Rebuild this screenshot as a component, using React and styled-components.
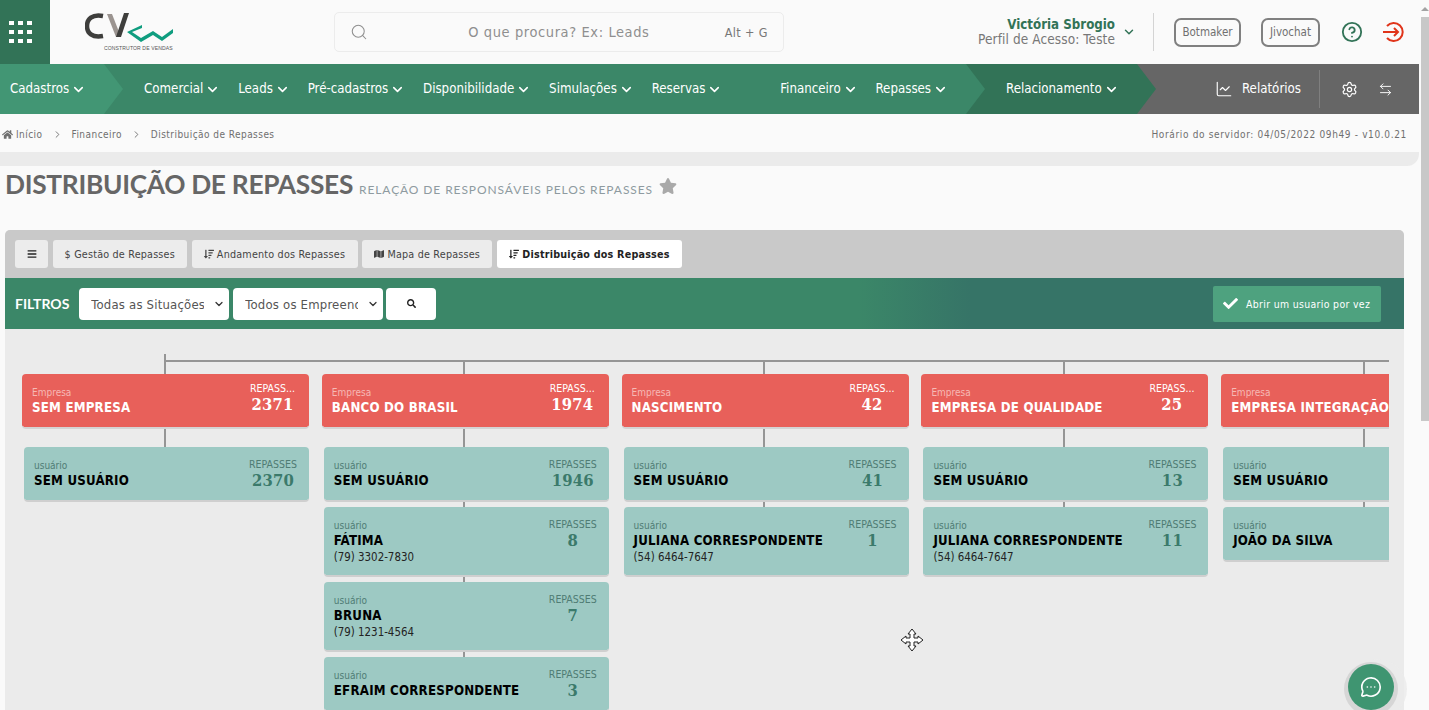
import React from 'react';
import styled, { createGlobalStyle } from 'styled-components';
import { Search, ChevronDown, LineChart, Settings, ArrowLeftRight, MessageCircleMore, CircleHelp, ChevronRight } from 'lucide-react';
import { FaHome, FaStar, FaBars, FaSortAmountDown, FaMap, FaCheck, FaSearch } from 'react-icons/fa';

const UI = '"DejaVu Sans Condensed", "DejaVu Sans", sans-serif';

const GlobalStyle = createGlobalStyle`
  html, body { margin: 0; padding: 0; height: 710px; overflow: hidden; background: #fafafa; }
  body { font-family: ${UI}; font-stretch: condensed; }
  * { box-sizing: border-box; }
`;

const Shell = styled.div`
  display: flex;
  width: 1429px;
  height: 710px;
  overflow: hidden;
`;

const Page = styled.div`
  width: 1419px;
  flex: none;
  position: relative;
`;

const Scrollbar = styled.div`
  width: 10px;
  flex: none;
  padding-left: 2px;
  display: flex;
  flex-direction: column;
`;

const ScrollUp = styled.div`
  height: 17px;
  display: flex;
  align-items: center;
  justify-content: center;
  &::before {
    content: '';
    border-left: 4px solid transparent;
    border-right: 4px solid transparent;
    border-bottom: 4px solid #a3a3a3;
  }
`;

const ScrollThumb = styled.div`
  height: 404px;
  background: #c8c8c8;
`;

const TopBar = styled.header`
  height: 64px;
  display: flex;
  align-items: center;
`;

const AppsButton = styled.div`
  width: 50px;
  height: 64px;
  background: #327357;
  padding-left: 9px;
  display: grid;
  grid-template-columns: repeat(3, 5px);
  grid-auto-rows: 4px;
  gap: 5px 4px;
  align-content: center;
  flex: none;
  i { background: #fff; display: block; }
`;

const LogoBox = styled.div`
  width: 284px;
  padding: 0 0 0 35px;
  flex: none;
  display: flex;
`;

const SearchBox = styled.div`
  width: 450px;
  height: 40px;
  border: 1px solid #ececec;
  border-radius: 5px;
  display: flex;
  align-items: center;
  padding: 0 15px;
  color: #8f8f8f;
  flex: none;
`;

const SearchHint = styled.span`
  flex: 1;
  text-align: center;
  font-size: 14.5px;
  letter-spacing: 0.6px;
  color: #8f8f8f;
  padding-left: 25px;
`;

const Shortcut = styled.span`
  font-size: 12.5px;
  color: #777;
  letter-spacing: 0.4px;
`;

const UserArea = styled.div`
  margin-left: auto;
  display: flex;
  align-items: center;
  padding-right: 14px;
`;

const UserText = styled.div`
  text-align: right;
  line-height: 15px;
  padding-bottom: 2px;
`;

const UserName = styled.div`
  font-size: 13.2px;
  font-weight: 700;
  color: #327357;
`;

const UserRole = styled.div`
  font-size: 13.5px;
  letter-spacing: 0.1px;
  line-height: 14px;
  color: #777;
`;

const UserChevron = styled(ChevronDown)`
  margin-left: 7px;
  flex: none;
`;

const Divider = styled.div`
  width: 1px;
  height: 38px;
  background: #d4d4d4;
  margin: 0 20px 0 17px;
`;

const PillButton = styled.div`
  height: 29px;
  width: ${(p) => p.$w}px;
  border: 2px solid #808080;
  border-radius: 7px;
  font-size: 11.5px;
  color: #707070;
  display: flex;
  align-items: center;
  justify-content: center;
  margin-right: ${(p) => p.$mr}px;
`;

const HelpIcon = styled(CircleHelp)`
  margin-right: 20px;
`;

const NavBar = styled.nav`
  height: 50px;
  display: flex;
  align-items: stretch;
  background: #3b8768;
  color: #fff;
  font-size: 13.2px;
  line-height: 48px;
`;

const NavSection = styled.div`
  display: flex;
  align-items: center;
  flex: none;
  width: ${(p) => p.$w}px;
  padding-left: ${(p) => p.$pl}px;
  margin-left: ${(p) => p.$ml || 0}px;
  gap: 17.8px;
  background: ${(p) => p.$bg};
  position: relative;
  z-index: ${(p) => p.$z};
  clip-path: polygon(0 0, calc(100% - 19px) 0, 100% 50%, calc(100% - 19px) 100%, 0 100%);
`;

const NavItem = styled.span`
  display: inline-flex;
  align-items: center;
  gap: 2px;
  white-space: nowrap;
  margin-left: ${(p) => p.$ml || 0}px;
`;

const NavRest = styled.div`
  flex: 1;
  margin-left: -19px;
  background: #666;
  display: flex;
  align-items: center;
  justify-content: flex-end;
`;

const ReportLink = styled.span`
  display: inline-flex;
  align-items: center;
  gap: 9px;
`;

const NavDivider = styled.div`
  width: 1px;
  height: 38px;
  background: #7f7f7f;
  margin: 0 21px 0 18px;
`;

const GearIcon = styled(Settings)`
  margin-right: 20px;
`;

const SwapIcon = styled(ArrowLeftRight)`
  margin-right: 26px;
`;

const Crumbs = styled.div`
  height: 38px;
  display: flex;
  align-items: center;
  justify-content: space-between;
  padding: 2px 12px 0 2px;
  font-size: 10px;
  color: #6f6f6f;
  letter-spacing: 0.45px;
`;

const CrumbTrail = styled.div`
  display: flex;
  align-items: center;
  gap: 3px;
  svg { color: #6f6f6f; }
`;

const CrumbSep = styled(ChevronRight)`
  margin: 0 6px;
`;

const ServerTime = styled.span`
  letter-spacing: 0.65px;
`;

const Band = styled.div`
  height: 14px;
  background: #ebebeb;
  border-radius: 0 0 12px 0;
`;

const TitleRow = styled.div`
  display: flex;
  align-items: baseline;
  padding: 2px 0 0 5px;
  height: 64px;
`;

const Title = styled.h1`
  margin: 0;
  font-family: Lato, sans-serif;
  font-size: 26.3px;
  font-weight: 700;
  color: #666;
  font-stretch: normal;
  letter-spacing: -0.3px;
`;

const Subtitle = styled.span`
  font-family: Lato, sans-serif;
  font-size: 12px;
  color: #8e9aa0;
  letter-spacing: 0.9px;
  margin-left: 6px;
`;

const StarIcon = styled(FaStar)`
  margin-left: 6px;
  align-self: flex-start;
  margin-top: 9px;
  color: #a9a9a9;
`;

const Panel = styled.section`
  margin: 0 15px 0 5px;
  background: #ebebeb;
  border-radius: 5px 5px 0 0;
  height: 480px;
  overflow: hidden;
`;

const TabRow = styled.div`
  height: 48px;
  background: #c9c9c9;
  display: flex;
  gap: 4.75px;
  padding: 10px 0 0 10px;
`;

const Tab = styled.div`
  height: 28px;
  width: ${(p) => p.$w}px;
  background: ${(p) => (p.$active ? '#fff' : '#ececec')};
  color: ${(p) => (p.$active ? '#222' : '#444')};
  font-weight: ${(p) => (p.$active ? 700 : 400)};
  border-radius: 3px;
  font-size: 10.7px;
  display: flex;
  align-items: center;
  justify-content: center;
  gap: 3px;
  letter-spacing: 0.2px;
  white-space: nowrap;
`;

const FilterBar = styled.div`
  height: 51px;
  display: flex;
  align-items: center;
  padding: 0 23px 0 10px;
  background: linear-gradient(90deg, #3b8768 0%, #3b8768 61%, #367467 69%, #367467 100%);
`;

const FilterLabel = styled.span`
  color: #fff;
  font-family: Lato, sans-serif;
  font-weight: 700;
  font-size: 14px;
  margin-right: 10px;
`;

const FilterSelect = styled.div`
  width: 150px;
  height: 32px;
  background: #fff;
  border-radius: 4px;
  margin-right: 4px;
  padding: 1px 4px 0 12px;
  display: flex;
  align-items: center;
  font-size: 13px;
  color: #555;
  letter-spacing: 0.2px;
  span { width: 113px; overflow: hidden; white-space: nowrap; }
  svg { margin-left: auto; color: #333; }
`;

const SearchButton = styled.div`
  width: 50px;
  height: 32px;
  background: #fff;
  border-radius: 4px;
  margin-left: -1px;
  display: flex;
  align-items: center;
  justify-content: center;
  color: #222;
`;

const ToggleButton = styled.div`
  margin-left: auto;
  width: 168px;
  height: 36px;
  background: #4ea27f;
  border-radius: 2px;
  color: #fff;
  font-size: 10.4px;
  display: flex;
  align-items: center;
  gap: 8px;
  padding-left: 10px;
  letter-spacing: 0.35px;
  white-space: nowrap;
`;

const TreeViewport = styled.div`
  width: 1384px;
  overflow: hidden;
  padding-top: 25px;
`;

const Rail = styled.div`
  height: 2px;
  margin: 6px 0 0 159px;
  background: #959595;
  position: relative;
  &::before {
    content: '';
    position: absolute;
    left: 0;
    top: -6px;
    width: 2px;
    height: 6px;
    background: #959595;
  }
`;

const Columns = styled.div`
  display: flex;
  padding-left: 11px;
  width: 1600px;
`;

const Column = styled.div`
  width: 299.8px;
  flex: none;
  padding: 0 6px;
  display: flex;
  flex-direction: column;
`;

const Connector = styled.div`
  width: 2px;
  height: ${(p) => p.$h}px;
  background: #959595;
  margin-left: 141.5px;
  flex: none;
`;

const CompanyCard = styled.div`
  width: 287px;
  height: 55px;
  background: #e8605a;
  border-radius: 4px;
  border-bottom: 2px solid #d4d4d4;
  background-clip: padding-box;
  color: #fff;
  display: flex;
  justify-content: space-between;
  padding: 0 14px 0 10px;
  white-space: nowrap;
  overflow: hidden;
`;

const UserCard = styled.div`
  width: 285px;
  margin-left: 2px;
  height: ${(p) => (p.$tall ? 70 : 55)}px;
  background: #9dc9c3;
  border-radius: 4px;
  border-bottom: 2px solid #cfcfcf;
  background-clip: padding-box;
  color: #000;
  display: flex;
  justify-content: space-between;
  padding: 0 12px 0 10px;
  white-space: nowrap;
  overflow: hidden;
`;

const CardInfo = styled.div`
  padding-top: 13px;
`;

const SmallLabel = styled.div`
  font-size: 10px;
  line-height: 12px;
  color: ${(p) => (p.$light ? '#f6b9b5' : '#4f7c74')};
`;

const CardName = styled.div`
  font-size: 13.2px;
  font-weight: 700;
  line-height: 16px;
  margin-top: 1px;
  letter-spacing: 0.2px;
`;

const Phone = styled.div`
  font-size: 11.4px;
  line-height: 14px;
  margin-top: 1px;
  color: #222;
`;

const CardCount = styled.div`
  flex: none;
  text-align: center;
  padding-top: ${(p) => (p.$light ? 8 : 11)}px;
`;

const CountLabel = styled.div`
  font-size: 10.5px;
  line-height: 12px;
  color: ${(p) => (p.$light ? '#fff' : '#4f7c74')};
`;

const CountValue = styled.div`
  font-family: "DejaVu Serif Condensed", "DejaVu Serif", serif;
  font-weight: 700;
  font-size: 16.5px;
  letter-spacing: 0.2px;
  line-height: 20px;
  margin-top: 1px;
  color: ${(p) => (p.$light ? '#fff' : '#3b7a6b')};
`;

const CursorMark = styled.svg`
  position: absolute;
  left: 900px;
  top: 628px;
`;

const ChatFab = styled.div`
  position: absolute;
  left: 1348px;
  top: 664px;
  width: 46px;
  height: 46px;
  border-radius: 50%;
  background: #3f9571;
  box-shadow: 0 2px 0 4px #d6d6d6, 6px 2px 0 7px rgba(235, 235, 235, 0.8);
  color: #fff;
  display: flex;
  align-items: center;
  justify-content: center;
`;

const LogoMark = () => (
  <svg width="91" height="42" viewBox="0 0 91 42">
    <path d="M18 5 C7 3 2 8 2 15 C2 22 7 27 18 25" fill="none" stroke="#3e3e3c" strokeWidth="4.5" />
    <path d="M22 3 L27 3 L36 26 L31 26 Z" fill="#9b9490" />
    <path d="M31 26 L36 26 L44 2 L39 2 Z" fill="#3e3e3c" />
    <path d="M57 14 L42 21 L56 31 L68 24 L77 30 L88 22 L88 18 L77 26 L68 20 L56 27 L47 21 L57 17 Z" fill="#0f9d7f" />
    <text x="19" y="39" fontSize="5.1" fontFamily="Liberation Sans" fill="#555" letterSpacing="0.1">CONSTRUTOR DE VENDAS</text>
  </svg>
);

const Exit = () => (
  <svg width="22" height="22" viewBox="0 0 22 22" fill="none" stroke="#e0341a" strokeWidth="2">
    <path d="M4 5 A9 9 0 1 1 4 17" />
    <path d="M0 11 H15 M11 7 L15 11 L11 15" />
  </svg>
);

const Chevron = () => <ChevronDown size={15} strokeWidth={2.5} />;

const columns = [
  { company: 'SEM EMPRESA', total: 2371, users: [{ name: 'SEM USUÁRIO', count: 2370 }] },
  {
    company: 'BANCO DO BRASIL',
    total: 1974,
    users: [
      { name: 'SEM USUÁRIO', count: 1946 },
      { name: 'FÁTIMA', count: 8, phone: '(79) 3302-7830' },
      { name: 'BRUNA', count: 7, phone: '(79) 1231-4564' },
      { name: 'EFRAIM CORRESPONDENTE', count: 3 },
    ],
  },
  {
    company: 'NASCIMENTO',
    total: 42,
    users: [
      { name: 'SEM USUÁRIO', count: 41 },
      { name: 'JULIANA CORRESPONDENTE', count: 1, phone: '(54) 6464-7647' },
    ],
  },
  {
    company: 'EMPRESA DE QUALIDADE',
    total: 25,
    users: [
      { name: 'SEM USUÁRIO', count: 13 },
      { name: 'JULIANA CORRESPONDENTE', count: 11, phone: '(54) 6464-7647' },
    ],
  },
  {
    company: 'EMPRESA INTEGRAÇÃO',
    users: [
      { name: 'SEM USUÁRIO' },
      { name: 'JOÃO DA SILVA' },
    ],
  },
];

const menuOne = ['Comercial', 'Leads', 'Pré-cadastros', 'Disponibilidade', 'Simulações', 'Reservas'];

const App = () => (
  <Shell>
    <GlobalStyle />
    <Page>
      <TopBar>
        <AppsButton>
          {Array.from({ length: 9 }).map((_, i) => <i key={i} />)}
        </AppsButton>
        <LogoBox><LogoMark /></LogoBox>
        <SearchBox>
          <Search size={18} strokeWidth={1.4} />
          <SearchHint>O que procura? Ex: Leads</SearchHint>
          <Shortcut>Alt + G</Shortcut>
        </SearchBox>
        <UserArea>
          <UserText>
            <UserName>Victória Sbrogio</UserName>
            <UserRole>Perfil de Acesso: Teste</UserRole>
          </UserText>
          <UserChevron size={14} color="#327357" strokeWidth={2.5} />
          <Divider />
          <PillButton $w={67} $mr={20}>Botmaker</PillButton>
          <PillButton $w={59} $mr={21}>Jivochat</PillButton>
          <HelpIcon size={22} color="#327357" strokeWidth={2} />
          <Exit />
        </UserArea>
      </TopBar>
      <NavBar>
        <NavSection $w={123} $pl={10} $bg="#429674" $z={3}>
          <NavItem>Cadastros <Chevron /></NavItem>
        </NavSection>
        <NavSection $w={881} $pl={40} $ml={-19} $bg="#3b8768" $z={2}>
          {menuOne.map((m) => <NavItem key={m}>{m} <Chevron /></NavItem>)}
          <NavItem $ml={40}>Financeiro <Chevron /></NavItem>
          <NavItem>Repasses <Chevron /></NavItem>
        </NavSection>
        <NavSection $w={190} $pl={40} $ml={-19} $bg="#327357" $z={1}>
          <NavItem>Relacionamento <Chevron /></NavItem>
        </NavSection>
        <NavRest>
          <ReportLink><LineChart size={18} strokeWidth={1.5} /> Relatórios</ReportLink>
          <NavDivider />
          <GearIcon size={17} strokeWidth={1.7} />
          <SwapIcon size={15} strokeWidth={1.5} />
        </NavRest>
      </NavBar>
      <Crumbs>
        <CrumbTrail>
          <FaHome size={11} /> Início
          <CrumbSep size={11} /> Financeiro
          <CrumbSep size={11} /> Distribuição de Repasses
        </CrumbTrail>
        <ServerTime>Horário do servidor: 04/05/2022 09h49 - v10.0.21</ServerTime>
      </Crumbs>
      <Band />
      <TitleRow>
        <Title>DISTRIBUIÇÃO DE REPASSES</Title>
        <Subtitle>RELAÇÃO DE RESPONSÁVEIS PELOS REPASSES</Subtitle>
        <StarIcon size={18} />
      </TitleRow>
      <Panel>
        <TabRow>
          <Tab $w={33}><FaBars size={10} color="#222" /></Tab>
          <Tab $w={134}>$ Gestão de Repasses</Tab>
          <Tab $w={166}><FaSortAmountDown size={10} /> Andamento dos Repasses</Tab>
          <Tab $w={130}><FaMap size={10} /> Mapa de Repasses</Tab>
          <Tab $w={185} $active><FaSortAmountDown size={10} /> Distribuição dos Repasses</Tab>
        </TabRow>
        <FilterBar>
          <FilterLabel>FILTROS</FilterLabel>
          <FilterSelect><span>Todas as Situações</span><ChevronDown size={12} strokeWidth={2.5} /></FilterSelect>
          <FilterSelect><span>Todos os Empreendimentos</span><ChevronDown size={12} strokeWidth={2.5} /></FilterSelect>
          <SearchButton><FaSearch size={9} /></SearchButton>
          <ToggleButton><FaCheck size={15} /> Abrir um usuario por vez</ToggleButton>
        </FilterBar>
        <TreeViewport>
          <Rail />
          <Columns>
            {columns.map((col) => (
              <Column key={col.company}>
                <Connector $h={12} />
                <CompanyCard>
                  <CardInfo>
                    <SmallLabel $light>Empresa</SmallLabel>
                    <CardName>{col.company}</CardName>
                  </CardInfo>
                  {col.total !== undefined && (
                    <CardCount $light>
                      <CountLabel $light>REPASS...</CountLabel>
                      <CountValue $light>{col.total}</CountValue>
                    </CardCount>
                  )}
                </CompanyCard>
                <Connector $h={18} />
                {col.users.map((u, i) => (
                  <React.Fragment key={u.name}>
                    {i > 0 && <Connector $h={5} />}
                    <UserCard $tall={!!u.phone}>
                      <CardInfo>
                        <SmallLabel>usuário</SmallLabel>
                        <CardName>{u.name}</CardName>
                        {u.phone && <Phone>{u.phone}</Phone>}
                      </CardInfo>
                      {u.count !== undefined && (
                        <CardCount>
                          <CountLabel>REPASSES</CountLabel>
                          <CountValue>{u.count}</CountValue>
                        </CardCount>
                      )}
                    </UserCard>
                  </React.Fragment>
                ))}
              </Column>
            ))}
          </Columns>
        </TreeViewport>
      </Panel>
      <CursorMark width="24" height="24" viewBox="0 0 24 24" fill="#fff" stroke="#222" strokeWidth="1">
        <path d="M12 1 L16 6 L14 6 L14 10 L18 10 L18 8 L23 12 L18 16 L18 14 L14 14 L14 18 L16 18 L12 23 L8 18 L10 18 L10 14 L6 14 L6 16 L1 12 L6 8 L6 10 L10 10 L10 6 L8 6 Z" />
      </CursorMark>
      <ChatFab><MessageCircleMore size={22} strokeWidth={1.8} /></ChatFab>
    </Page>
    <Scrollbar>
      <ScrollUp />
      <ScrollThumb />
    </Scrollbar>
  </Shell>
);

export default App;
